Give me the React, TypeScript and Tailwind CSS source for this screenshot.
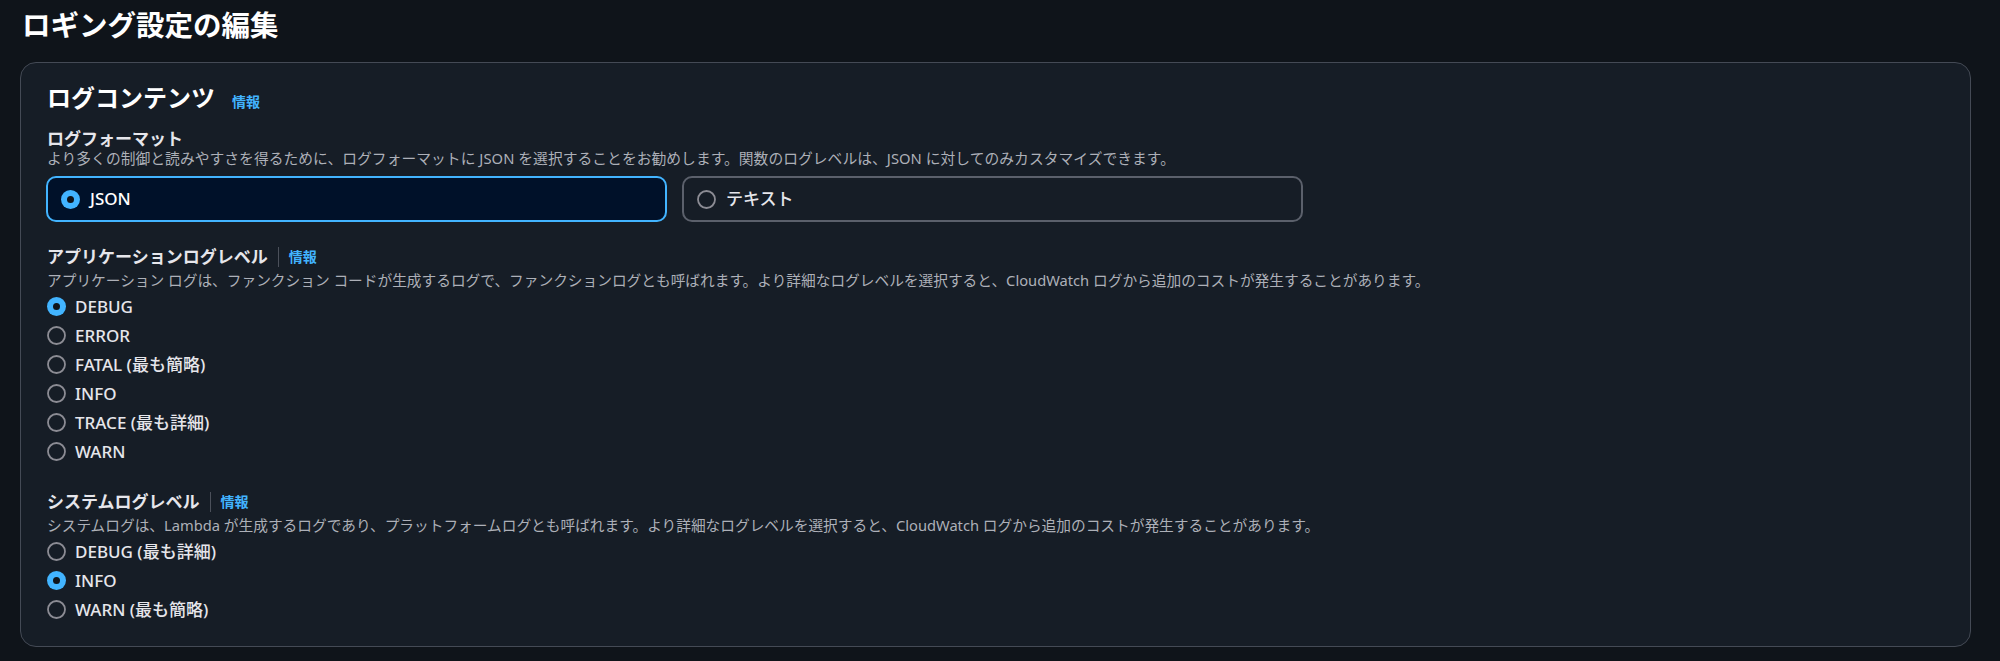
import React from 'react';

const FONT = '"Noto Sans", "Noto Sans CJK JP", sans-serif';

type Option = { label: string; checked?: boolean };

function RadioDot({ checked }: { checked?: boolean }) {
  if (checked) {
    return (
      <svg className="w-[19px] h-[19px] shrink-0" viewBox="0 0 19 19">
        <circle cx="9.5" cy="9.5" r="9.5" fill="#42b4ff" />
        <circle cx="9.5" cy="9.5" r="3.5" fill="#0f141a" />
      </svg>
    );
  }
  return (
    <svg className="w-[19px] h-[19px] shrink-0" viewBox="0 0 19 19">
      <circle cx="9.5" cy="9.5" r="8.5" fill="none" stroke="#8c8c94" strokeWidth="1.8" />
    </svg>
  );
}

function InfoLink() {
  return <a className="text-[14px] font-bold text-[#42b4ff] leading-[20px]">情報</a>;
}

function FieldLabel({ children }: { children: React.ReactNode }) {
  return (
    <div className="flex items-center h-[20px]">
      <span className="text-[17px] font-bold text-[#e6e6eb] leading-[20px]">{children}</span>
      <span className="mx-[10px] w-px h-[20px] bg-[#4b505a]" />
      <InfoLink />
    </div>
  );
}

function RadioList({ options }: { options: Option[] }) {
  return (
    <div className="mt-[2px] flex flex-col">
      {options.map((o) => (
        <label key={o.label} className="flex items-center gap-[9px] h-[29px]">
          <RadioDot checked={o.checked} />
          <span className="text-[17px] font-medium text-[#e6e6eb] leading-[22px]">{o.label}</span>
        </label>
      ))}
    </div>
  );
}

export default function App() {
  return (
    <div className="w-full h-[661px] bg-[#0f141a] pl-[20px] pr-[29px] pt-[8px] overflow-hidden" style={{ fontFamily: FONT }}>
      <h1 className="pl-[2px] text-[28.5px] font-bold text-white leading-[34px]">ロギング設定の編集</h1>

      <div className="mt-[20px] rounded-[16px] border border-[#444a55] bg-[#161d26] pl-[26px] pt-[19px] pb-[22px]">
        {/* ログコンテンツ */}
        <div className="flex items-baseline gap-[17px]">
          <h2 className="text-[24px] font-bold text-white leading-[31px]">ログコンテンツ</h2>
          <InfoLink />
        </div>

        {/* ログフォーマット */}
        <div className="mt-[16px]">
          <div className="text-[17px] font-bold text-[#e6e6eb] leading-[20px]">ログフォーマット</div>
          <p className="text-[14.75px] text-[#adb0b8] leading-[19px] tracking-[0.05px]">
            より多くの制御と読みやすさを得るために、ログフォーマットに JSON を選択することをお勧めします。関数のログレベルは、JSON に対してのみカスタマイズできます。
          </p>
          <div className="mt-[8px] grid grid-cols-2 gap-[15px] w-[1257px] -ml-px">
            <label className="flex items-center gap-[10px] h-[46px] rounded-[10px] border-2 border-[#42b4ff] bg-[#001129] pl-[13px]">
              <RadioDot checked />
              <span className="text-[17px] font-medium text-white leading-[22px]">JSON</span>
            </label>
            <label className="flex items-center gap-[10px] h-[46px] rounded-[10px] border-2 border-[#5b606b] pl-[13px]">
              <RadioDot />
              <span className="text-[17px] font-medium text-[#e6e6eb] leading-[22px]">テキスト</span>
            </label>
          </div>
        </div>

        {/* アプリケーションログレベル */}
        <div className="mt-[25px]">
          <FieldLabel>アプリケーションログレベル</FieldLabel>
          <p className="mt-[4px] text-[14.7px] text-[#adb0b8] leading-[19px]">
            アプリケーション ログは、ファンクション コードが生成するログで、ファンクションログとも呼ばれます。より詳細なログレベルを選択すると、CloudWatch ログから追加のコストが発生することがあります。
          </p>
          <RadioList
            options={[
              { label: 'DEBUG', checked: true },
              { label: 'ERROR' },
              { label: 'FATAL (最も簡略)' },
              { label: 'INFO' },
              { label: 'TRACE (最も詳細)' },
              { label: 'WARN' },
            ]}
          />
        </div>

        {/* システムログレベル */}
        <div className="mt-[26px]">
          <FieldLabel>システムログレベル</FieldLabel>
          <p className="mt-[4px] text-[14.7px] text-[#adb0b8] leading-[19px]">
            システムログは、Lambda が生成するログであり、プラットフォームログとも呼ばれます。より詳細なログレベルを選択すると、CloudWatch ログから追加のコストが発生することがあります。
          </p>
          <RadioList
            options={[
              { label: 'DEBUG (最も詳細)' },
              { label: 'INFO', checked: true },
              { label: 'WARN (最も簡略)' },
            ]}
          />
        </div>
      </div>
    </div>
  );
}
